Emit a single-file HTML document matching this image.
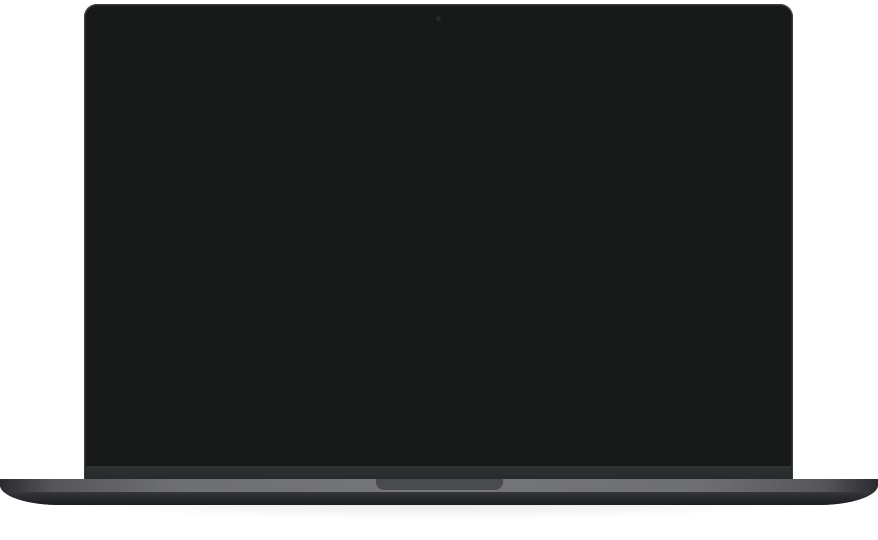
<!DOCTYPE html>
<html><head><style>
html,body{margin:0;padding:0;background:#fff;width:878px;height:540px;overflow:hidden;position:relative}
.lid{position:absolute;left:84px;top:4px;width:709px;height:476px;background:#161817;border-radius:13px 13px 0 0;box-shadow:inset 0 0 0 1.5px #3a3c3d}
.screen{position:absolute;left:86px;top:6px;width:705px;height:460px;background:#171918;border-radius:11px 11px 0 0}
.cam{position:absolute;left:436px;top:16px;width:5px;height:5px;border-radius:50%;background:#262829}
.chin{position:absolute;left:86px;top:466px;width:705px;height:13px;background:linear-gradient(#2e3334,#262a2b)}
.shadow{position:absolute;left:30px;top:498px;width:818px;height:22px;background:radial-gradient(ellipse at 50% 0%,rgba(0,0,0,.12),rgba(0,0,0,0) 70%)}
.base{position:absolute;left:0;top:479px;width:878px;height:26px;border-radius:0 0 60px 60px/0 0 20px 20px;overflow:hidden;background:#222327}
.top{position:absolute;left:0;top:0;width:100%;height:14px;background:linear-gradient(90deg,#2a2b2f 0%,#55565a 6%,#6e6f73 20%,#75767a 50%,#6e6f73 80%,#55565a 94%,#2a2b2f 100%)}
.bot{position:absolute;left:0;top:13px;width:100%;height:13px;background:linear-gradient(#35363a,#1c1d20)}
.notch{position:absolute;left:376px;top:479px;width:127px;height:11px;background:#4a4b4f;border-radius:0 0 8px 8px}
</style></head><body>
<div class="shadow"></div>
<div class="lid"></div>
<div class="screen"></div>
<div class="cam"></div>
<div class="chin"></div>
<div class="base"><div class="top"></div><div class="bot"></div></div>
<div class="notch"></div>
</body></html>
